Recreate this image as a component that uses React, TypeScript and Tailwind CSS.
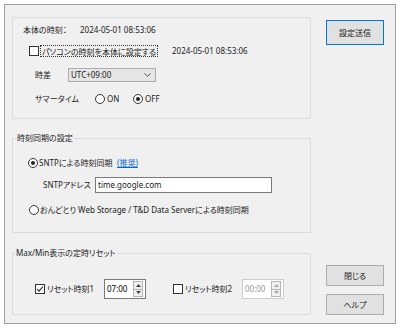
import React from "react";

const font = {
  fontFamily: '"Noto Sans", "Noto Sans CJK JP", sans-serif',
};

function Check({ checked }: { checked?: boolean }) {
  return (
    <span className="inline-flex w-[10px] h-[10px] border border-[#333333] bg-white items-center justify-center shrink-0">
      {checked && (
        <svg width="8" height="8" viewBox="0 0 8 8">
          <path d="M1 4 L3 6.2 L7 1.5" stroke="#222" strokeWidth="1.1" fill="none" />
        </svg>
      )}
    </span>
  );
}

function Radio({ checked }: { checked?: boolean }) {
  return (
    <span className="inline-flex w-[10px] h-[10px] rounded-full border border-[#333333] bg-white items-center justify-center shrink-0">
      {checked && <span className="w-[4px] h-[4px] rounded-full bg-[#222]" />}
    </span>
  );
}

function Spin({ value, disabled }: { value: string; disabled?: boolean }) {
  return (
    <div
      className={
        "flex items-center w-[42px] h-[20px] bg-white border shrink-0 " +
        (disabled ? "border-[#cccccc] text-[#9a9a9a]" : "border-[#7a7a7a] text-black")
      }
    >
      <span className="flex-1 pl-[2px] leading-[12px]">{value}</span>
      <div className="flex flex-col w-[10px] h-[16px] mr-[2px]">
        <div className="flex-1 border border-[#b5b5b5] bg-[#f0f0f0] flex items-center justify-center">
          <svg width="5" height="3" viewBox="0 0 5 3">
            <path d="M0 3 L2.5 0 L5 3 Z" fill={disabled ? "#a8a8a8" : "#444"} />
          </svg>
        </div>
        <div className="flex-1 border border-[#b5b5b5] border-t-0 bg-[#f0f0f0] flex items-center justify-center">
          <svg width="5" height="3" viewBox="0 0 5 3">
            <path d="M0 0 L2.5 3 L5 0 Z" fill={disabled ? "#a8a8a8" : "#444"} />
          </svg>
        </div>
      </div>
    </div>
  );
}

export default function App() {
  return (
    <div
      className="w-[400px] h-[328px] bg-white p-[4px] text-[8px] text-[#1a1a1a] whitespace-nowrap [font-feature-settings:'palt']"
      style={font}
    >
      <div className="h-full border border-[#a0a0a0] bg-[#f0f0f0] flex">
        {/* left column */}
        <div className="ml-[7px] mt-[12px] w-[299px] flex flex-col">
          {/* group 1 */}
          <div className="h-[102px] border border-[#dcdcdc] flex flex-col">
            <div className="mt-[6px] h-[12px] flex items-center pl-[10px]">
              <span className="w-[57px]">本体の時刻：</span>
              <span>2024-05-01 08:53:06</span>
            </div>
            <div className="mt-[9px] h-[12px] flex items-center pl-[16px]">
              <Check />
              <div className="w-[133px] shrink-0 flex items-center">
                <span className="ml-[1px] h-[12px] leading-[11px] border border-dotted border-[#333] px-[1px]">
                  パソコンの時刻を本体に設定する
                </span>
              </div>
              <span>2024-05-01 08:53:06</span>
            </div>
            <div className="mt-[11px] h-[14px] flex items-center pl-[22px]">
              <span className="w-[33px]">時差</span>
              <div className="w-[88px] h-[14px] bg-[#e5e5e5] border border-[#adadad] flex items-center pl-[2px] pr-[4px]">
                <span className="flex-1">UTC+09:00</span>
                <svg width="7" height="4" viewBox="0 0 7 4">
                  <path d="M0.5 0.5 L3.5 3.3 L6.5 0.5" stroke="#555" strokeWidth="1" fill="none" />
                </svg>
              </div>
            </div>
            <div className="mt-[11px] h-[12px] flex items-center pl-[22px]">
              <span className="w-[60px]">サマータイム</span>
              <Radio />
              <span className="ml-[2px] w-[26px]">ON</span>
              <Radio checked />
              <span className="ml-[2px]">OFF</span>
            </div>
          </div>

          {/* group 2 */}
          <fieldset className="mt-[13px] h-[101px] border border-[#dcdcdc] flex flex-col">
            <legend className="ml-[3px] px-[1px] leading-[12px]">時刻同期の設定</legend>
            <div className="mt-[13px] h-[12px] flex items-center pl-[15px]">
              <Radio checked />
              <span className="ml-[1px] w-[78px]">SNTPによる時刻同期</span>
              <span className="text-[#0066cc] underline">(推奨)</span>
            </div>
            <div className="mt-[8px] h-[16px] flex items-center pl-[30px]">
              <span className="w-[52px]">SNTPアドレス</span>
              <div className="w-[177px] h-[16px] bg-white border border-[#7a7a7a] flex items-center pl-[2px]">
                time.google.com
              </div>
            </div>
            <div className="mt-[11px] h-[12px] flex items-center pl-[16px]">
              <Radio />
              <span className="ml-[1px]">おんどとり Web Storage / T&amp;D Data Serverによる時刻同期</span>
            </div>
          </fieldset>

          {/* group 3 */}
          <fieldset className="mt-[14px] h-[68px] border border-[#dcdcdc] flex flex-col">
            <legend className="ml-[2px] px-[1px] leading-[12px]">Max/Min表示の定時リセット</legend>
            <div className="mt-[20px] h-[20px] flex items-center pl-[22px]">
              <Check checked />
              <span className="ml-[2px] w-[57px]">リセット時刻1</span>
              <Spin value="07:00" />
              <span className="w-[27px]" />
              <Check />
              <span className="ml-[2px] w-[57px]">リセット時刻2</span>
              <Spin value="00:00" disabled />
            </div>
          </fieldset>
        </div>

        {/* right column */}
        <div className="ml-[15px] w-[58px] flex flex-col">
          <button className="mt-[15px] h-[25px] bg-[#e1e1e1] border border-[#0078d7] text-[#1a1a1a]">
            設定送信
          </button>
          <button className="mt-auto h-[21px] bg-[#e1e1e1] border border-[#adadad] text-[#1a1a1a]">
            閉じる
          </button>
          <button className="mt-[8px] mb-[8px] h-[21px] bg-[#e1e1e1] border border-[#adadad] text-[#1a1a1a]">
            ヘルプ
          </button>
        </div>
      </div>
    </div>
  );
}
